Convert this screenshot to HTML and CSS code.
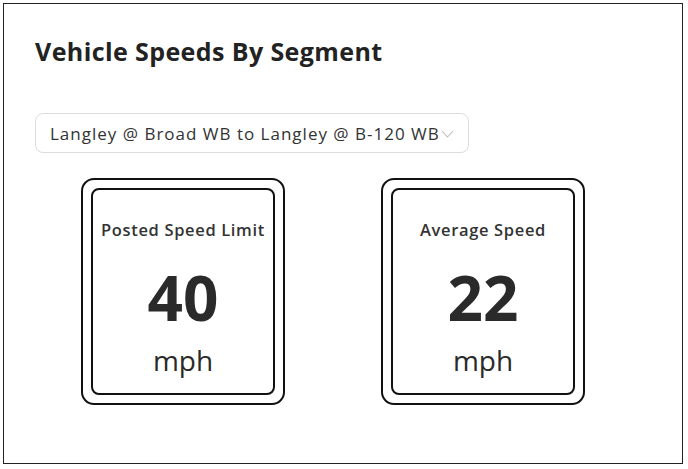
FILE: index.html
```html
<!DOCTYPE html>
<html>
<head>
<meta charset="utf-8">
<link rel="stylesheet" href="styles.css">
</head>
<body>
<div class="frame">
  <h1 class="title">Vehicle Speeds By Segment</h1>
  <div class="select">
    <span class="select-text">Langley @ Broad WB to Langley @ B-120 WB</span>
    <svg class="chev" width="13" height="8" viewBox="0 0 13 8"><path d="M1 1 L6.5 7 L12 1" fill="none" stroke="#bdbdbd" stroke-width="1.1"/></svg>
  </div>
  <div class="cards">
    <div class="sign">
      <div class="sign-inner">
        <div class="label">Posted Speed Limit</div>
        <div class="value">40</div>
        <div class="unit">mph</div>
      </div>
    </div>
    <div class="sign">
      <div class="sign-inner">
        <div class="label">Average Speed</div>
        <div class="value">22</div>
        <div class="unit">mph</div>
      </div>
    </div>
  </div>
</div>
</body>
</html>
```
FILE: styles.css
```css
html, body {
  margin: 0;
  padding: 0;
  background: #fff;
}
body {
  font-family: "Open Sans", "Noto Sans", sans-serif;
  color: #222;
}
.frame {
  margin: 3px 0 0 3px;
  width: 678px;
  height: 459px;
  border: 1.5px solid #222;
  padding: 0;
  overflow: hidden;
}
.title {
  margin: 32px 0 0 31px;
  font-size: 25px;
  font-weight: 700;
  line-height: 30px;
  letter-spacing: 0.4px;
  color: #222;
}
.select {
  margin: 47px 0 0 31px;
  width: 418px;
  height: 38px;
  border: 1px solid #dcdcdc;
  border-radius: 8px;
  display: flex;
  align-items: center;
  padding-left: 14px;
}
.select-text {
  font-size: 17px;
  letter-spacing: 1px;
  color: #333;
  white-space: nowrap;
}
.chev {
  margin-left: 1px;
  margin-top: 1px;
  flex: none;
}
.cards {
  display: flex;
  gap: 96px;
  margin: 25px 0 0 77px;
}
.sign {
  width: 184px;
  height: 207px;
  border: 2px solid #111;
  border-radius: 13px;
  padding: 8px;
}
.sign-inner {
  width: 180px;
  height: 203px;
  border: 2px solid #111;
  border-radius: 8px;
  display: flex;
  flex-direction: column;
  align-items: center;
}
.label {
  margin-top: 30px;
  font-size: 16.5px;
  font-weight: 600;
  line-height: 20px;
  letter-spacing: 0.65px;
  color: #333;
}
.value {
  margin-top: 25px;
  font-size: 62px;
  font-weight: 700;
  line-height: 64px;
  color: #2a2a2a;
}
.unit {
  margin-top: 14px;
  font-size: 28px;
  line-height: 34px;
  color: #2a2a2a;
}
```
